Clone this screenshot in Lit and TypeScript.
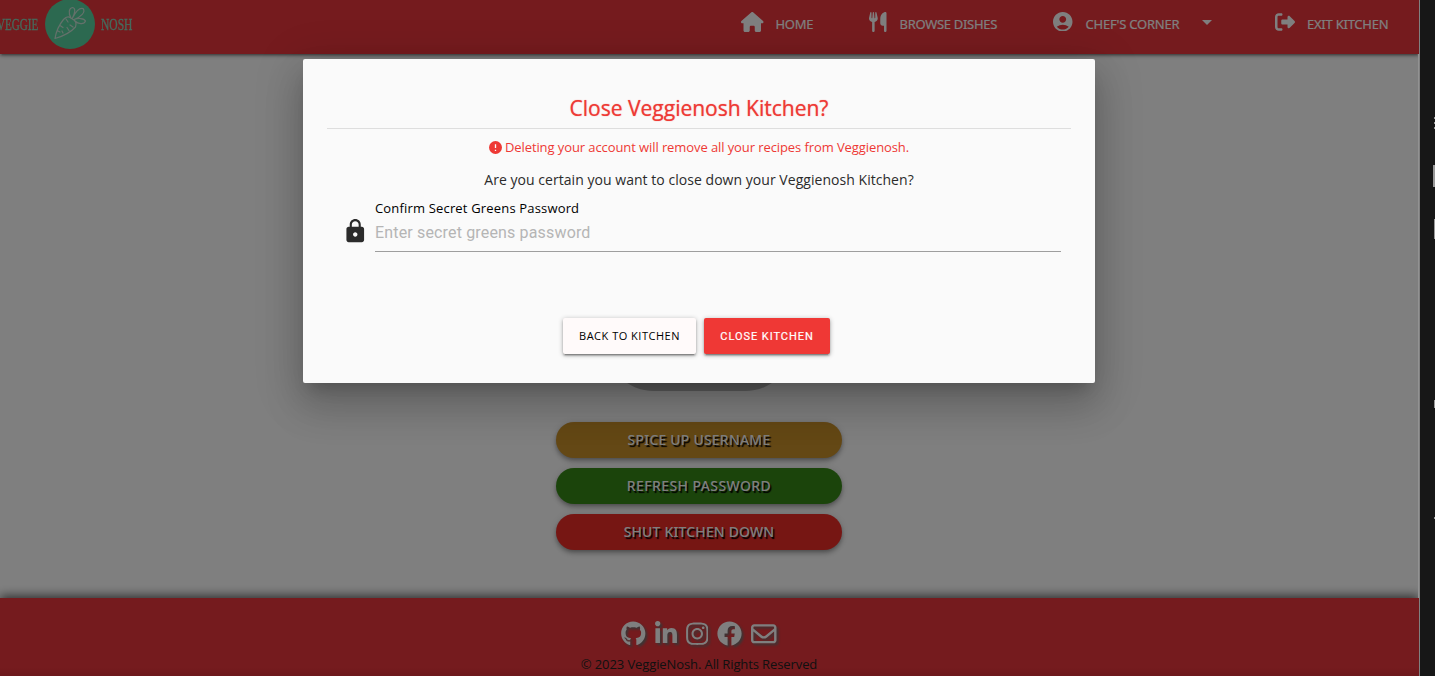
import { LitElement, html, svg, css } from "lit";
import { customElement } from "lit/decorators.js";

const HOUSE = "M575.8 255.5c0 18-15 32.1-32 32.1h-32l.7 160.2c0 2.7-.2 5.4-.5 8.1V472c0 22.1-17.9 40-40 40H456c-1.1 0-2.2 0-3.3-.1c-1.4 .1-2.8 .1-4.2 .1H416 392c-22.1 0-40-17.9-40-40V448 384c0-17.7-14.3-32-32-32H256c-17.7 0-32 14.3-32 32v64 24c0 22.1-17.9 40-40 40H160 128.1c-1.5 0-3-.1-4.5-.2c-1.2 .1-2.4 .2-3.6 .2H104c-22.1 0-40-17.9-40-40V360c0-.9 0-1.9 .1-2.8V287.6H32c-18 0-32-14-32-32.1c0-9 3-17 10-24L266.4 8c7-7 15-8 22-8s15 2 21 7L564.8 231.5c8 7 12 15 11 24z";
const UTENSILS = "M416 0C400 0 288 32 288 176V288c0 35.3 28.7 64 64 64h32V480c0 17.7 14.3 32 32 32s32-14.3 32-32V352 240 32c0-17.7-14.3-32-32-32zM64 16C64 7.8 57.9 1 49.7.1S34.2 4.6 32.4 12.5L2.1 148.8C.7 155.1 0 161.5 0 167.9c0 45.9 35.1 83.6 80 87.7V480c0 17.7 14.3 32 32 32s32-14.3 32-32V255.6c44.9-4.1 80-41.8 80-87.7c0-6.4-.7-12.8-2.1-19.1L191.6 12.5c-1.8-8-9.3-13.3-17.4-12.4S160 7.8 160 16V150.2c0 5.4-4.4 9.8-9.8 9.8c-5.1 0-9.3-3.9-9.8-9L127.9 14.6C127.2 6.3 120.3 0 112 0s-15.2 6.3-15.9 14.6L83.7 151c-.5 5.1-4.7 9-9.8 9c-5.4 0-9.8-4.4-9.8-9.8V16z";
const ACCOUNT = "M12 2C6.48 2 2 6.48 2 12s4.48 10 10 10 10-4.48 10-10S17.52 2 12 2zm0 4c1.93 0 3.5 1.57 3.5 3.5S13.93 13 12 13s-3.5-1.57-3.5-3.5S10.07 6 12 6zm0 14c-2.03 0-4.43-.82-6.14-2.88a9.947 9.947 0 0 1 12.28 0C16.43 19.18 14.03 20 12 20z";
const EXIT = "M377.9 105.9L500.7 228.7c7.2 7.2 11.3 17.1 11.3 27.3s-4.1 20.1-11.3 27.3L377.9 406.1c-6.4 6.4-15 9.9-24 9.9c-18.7 0-33.9-15.2-33.9-33.9l0-62.1-128 0c-17.7 0-32-14.3-32-32l0-64c0-17.7 14.3-32 32-32l128 0 0-62.1c0-18.7 15.2-33.9 33.9-33.9c9 0 17.6 3.6 24 9.9zM160 96L96 96c-17.7 0-32 14.3-32 32l0 256c0 17.7 14.3 32 32 32l64 0c17.7 0 32 14.3 32 32s-14.3 32-32 32l-64 0c-53 0-96-43-96-96L0 128C0 75 43 32 96 32l64 0c17.7 0 32 14.3 32 32s-14.3 32-32 32z";
const LOCK = "M18 8h-1V6c0-2.76-2.24-5-5-5S7 3.24 7 6v2H6c-1.1 0-2 .9-2 2v10c0 1.1.9 2 2 2h12c1.1 0 2-.9 2-2V10c0-1.1-.9-2-2-2zm-6 9c-1.1 0-2-.9-2-2s.9-2 2-2 2 .9 2 2-.9 2-2 2zm3.1-9H8.9V6c0-1.71 1.39-3.1 3.1-3.1 1.71 0 3.1 1.39 3.1 3.1v2z";
const GITHUB = "M165.9 397.4c0 2-2.3 3.6-5.2 3.6-3.3.3-5.6-1.3-5.6-3.6 0-2 2.3-3.6 5.2-3.6 3-.3 5.6 1.3 5.6 3.6zm-31.1-4.5c-.7 2 1.3 4.3 4.3 4.9 2.6 1 5.6 0 6.2-2s-1.3-4.3-4.3-5.2c-2.6-.7-5.5.3-6.2 2.3zm44.2-1.7c-2.9.7-4.9 2.6-4.6 4.9.3 2 2.9 3.3 5.9 2.6 2.9-.7 4.9-2.6 4.6-4.6-.3-1.9-3-3.2-5.9-2.9zM244.8 8C106.1 8 0 113.3 0 252c0 110.9 69.8 205.8 169.5 239.2 12.8 2.3 17.3-5.6 17.3-12.1 0-6.2-.3-40.4-.3-61.4 0 0-70 15-84.7-29.8 0 0-11.4-29.1-27.8-36.6 0 0-22.9-15.7 1.6-15.4 0 0 24.9 2 38.6 25.8 21.9 38.6 58.6 27.5 72.9 20.9 2.3-16 8.8-27.1 16-33.7-55.9-6.2-112.3-14.3-112.3-110.5 0-27.5 7.6-41.3 23.6-58.9-2.6-6.5-11.1-33.3 2.6-67.9 20.9-6.5 69 27 69 27 20-5.6 41.5-8.5 62.8-8.5s42.8 2.9 62.8 8.5c0 0 48.1-33.6 69-27 13.7 34.7 5.2 61.4 2.6 67.9 16 17.7 25.8 31.5 25.8 58.9 0 96.5-58.9 104.2-114.8 110.5 9.2 7.9 17 22.9 17 46.4 0 33.7-.3 75.4-.3 83.6 0 6.5 4.6 14.4 17.3 12.1C428.2 457.8 496 362.9 496 252 496 113.3 383.5 8 244.8 8z";
const LINKEDIN = "M100.28 448H7.4V148.9h92.88zM53.79 108.1C24.09 108.1 0 83.5 0 53.8a53.79 53.79 0 0 1 107.58 0c0 29.7-24.1 54.3-53.79 54.3zM447.9 448h-92.68V302.4c0-34.7-.7-79.2-48.29-79.2-48.29 0-55.69 37.7-55.69 76.7V448h-92.78V148.9h89.08v40.8h1.3c12.4-23.5 42.69-48.3 87.88-48.3 94 0 111.28 61.9 111.28 142.3V448z";
const INSTAGRAM = "M224.1 141c-63.6 0-114.9 51.3-114.9 114.9s51.3 114.9 114.9 114.9S339 319.5 339 255.9 287.7 141 224.1 141zm0 189.6c-41.1 0-74.7-33.5-74.7-74.7s33.5-74.7 74.7-74.7 74.7 33.5 74.7 74.7-33.6 74.7-74.7 74.7zm146.4-194.3c0 14.9-12 26.8-26.8 26.8-14.9 0-26.8-12-26.8-26.8s12-26.8 26.8-26.8 26.8 12 26.8 26.8zm76.1 27.2c-1.7-35.9-9.9-67.7-36.2-93.9-26.2-26.2-58-34.4-93.9-36.2-37-2.1-147.9-2.1-184.9 0-35.8 1.7-67.6 9.9-93.9 36.1s-34.4 58-36.2 93.9c-2.1 37-2.1 147.9 0 184.9 1.7 35.9 9.9 67.7 36.2 93.9s58 34.4 93.9 36.2c37 2.1 147.9 2.1 184.9 0 35.9-1.7 67.7-9.9 93.9-36.2 26.2-26.2 34.4-58 36.2-93.9 2.1-37 2.1-147.8 0-184.8zM398.8 388c-7.8 19.6-22.9 34.7-42.6 42.6-29.5 11.7-99.5 9-132.1 9s-102.7 2.6-132.1-9c-19.6-7.8-34.7-22.9-42.6-42.6-11.7-29.5-9-99.5-9-132.1s-2.6-102.7 9-132.1c7.8-19.6 22.9-34.7 42.6-42.6 29.5-11.7 99.5-9 132.1-9s102.7-2.6 132.1 9c19.6 7.8 34.7 22.9 42.6 42.6 11.7 29.5 9 99.5 9 132.1s2.7 102.7-9 132.1z";
const FACEBOOK = "M504 256C504 119 393 8 256 8S8 119 8 256c0 123.78 90.69 226.38 209.25 245V327.69h-63V256h63v-54.64c0-62.15 37-96.48 93.67-96.48 27.14 0 55.52 4.84 55.52 4.84v61h-31.28c-30.8 0-40.41 19.12-40.41 38.73V256h68.78l-11 71.69h-57.78V501C413.31 482.38 504 379.78 504 256z";
const ENVELOPE = "M64 112c-8.8 0-16 7.2-16 16v22.1L220.5 291.7c20.7 17 50.4 17 71.1 0L464 150.1V128c0-8.8-7.2-16-16-16H64zM48 212.2V384c0 8.8 7.2 16 16 16H448c8.8 0 16-7.2 16-16V212.2L322 328.8c-38.4 31.5-93.7 31.5-132 0L48 212.2zM0 128C0 92.7 28.7 64 64 64H448c35.3 0 64 28.7 64 64V384c0 35.3-28.7 64-64 64H64c-35.3 0-64-28.7-64-64V128z";

const icon = (d: string, box: string, w: number, h: number) =>
  html`<svg class="icon" viewBox=${box} width=${w} height=${h}>${svg`<path fill="currentColor" d=${d}></path>`}</svg>`;

@customElement("app-root")
export class AppRoot extends LitElement {
  static styles = css`
    :host {
      display: flex;
      position: relative;
      width: 1435px;
      height: 676px;
      overflow: hidden;
      background: #171717;
      font-family: "Open Sans", "Noto Sans", sans-serif;
    }
    .icon { display: block; flex: none; }
    .page {
      display: flex;
      flex-direction: column;
      box-sizing: border-box;
      width: 1419px;
      height: 676px;
      background: #fff;
      overflow: hidden;
    }
    .edge { width: 1px; height: 676px; background: #808080; z-index: 3; }
    .glow { width: 1px; height: 544px; margin-top: 54px; box-shadow: -1px 0 0 #929292; }
    header {
      display: flex;
      flex: none;
      height: 54px;
      background: #ea363c;
      color: #fff;
      box-shadow: 0 2px 2px 0 rgba(0,0,0,.14), 0 3px 1px -2px rgba(0,0,0,.12), 0 1px 5px 0 rgba(0,0,0,.4);
      z-index: 1;
    }
    .brand {
      display: flex;
      align-items: center;
      height: 50px;
      margin: -1px 0 0 -3px;
      gap: 6px;
      font-family: "Liberation Serif", serif;
      font-size: 16.5px;
      color: #8ad4b8;
      -webkit-text-stroke: .3px #8ad4b8;
      width: 731px;
    }
    .brand span { position: relative; top: 1px; width: 32px; transform: scaleX(.7); transform-origin: left; }
    .brand .veg { width: 42px; transform: scaleX(.67); }
    .badge { border-radius: 50%; background: #58d2a0; }
    nav { display: flex; height: 48px; padding-left: 13px; }
    .item {
      display: flex;
      flex: none;
      align-items: center;
      height: 48px;
      font-family: "Noto Sans", sans-serif;
      font-size: 13px;
      letter-spacing: -0.3px;
      white-space: nowrap;
      -webkit-text-stroke: .15px #fff;
    }
    .item .icon { margin-top: -5px; }
    .home { width: 128px; gap: 12px; }
    .browse { width: 184px; gap: 13px; }
    .chef { width: 222px; gap: 13px; }
    .chef .text { width: 103px; letter-spacing: -.22px; }
    .exit { gap: 12px; letter-spacing: -.24px; }
    main { display: flex; flex: 1; flex-direction: column; align-items: center; padding-right: 21px; }
    .avatar { width: 190px; height: 190px; margin-top: 146px; border-radius: 50px; background: #bdbdbd; box-sizing: content-box; padding: .5px; margin-bottom: 31px; }
    .pill {
      display: flex;
      flex: none;
      align-items: center;
      justify-content: center;
      box-sizing: border-box;
      width: 286px;
      height: 36px;
      padding-bottom: 2px;
      margin-bottom: 10px;
      border-radius: 18px;
      font-family: "Noto Sans", sans-serif;
      font-size: 14px;
      font-weight: 500;
      color: #fff;
      text-shadow: 1.5px 1.5px 1px #000;
      box-shadow: 0 4px 5px 0 rgba(0,0,0,.14), 0 1px 10px 0 rgba(0,0,0,.12), 0 2px 4px -1px rgba(0,0,0,.3);
    }
    .gold { background: #c9902b; letter-spacing: .2px; }
    .green { background: #378917; letter-spacing: .4px; }
    .red { background: #ec2c27; letter-spacing: .15px; }
    footer {
      display: flex;
      flex: none;
      flex-direction: column;
      align-items: center;
      box-sizing: border-box;
      height: 78px;
      padding: 23px 21px 0 0;
      background: linear-gradient(#ea363c 70px, #d93238 78px);
      box-shadow: 0 -2px 10px rgba(0,0,0,.65);
      z-index: 1;
    }
    .social { display: flex; align-items: center; gap: 9px; height: 25px; color: #fff; }
    .social .icon { filter: drop-shadow(2px 2px 1px rgba(110,110,110,.9)); }
    .copy { margin-top: 9px; font-size: 13px; line-height: 18px; letter-spacing: -.1px; color: #222; white-space: nowrap; }
    .shade { position: absolute; inset: 0 16px 0 0; background: rgba(0,0,0,.5); z-index: 2; }
    .modal {
      position: absolute;
      left: 303px;
      top: 59px;
      box-sizing: border-box;
      width: 792px;
      height: 324px;
      padding: 33px 24px 0;
      border-radius: 2px;
      background: #fafafa;
      box-shadow: 0 24px 38px 3px rgba(0,0,0,.14), 0 9px 46px 8px rgba(0,0,0,.12), 0 11px 15px -7px rgba(0,0,0,.2);
      z-index: 4;
      text-align: center;
      white-space: nowrap;
    }
    h1 {
      margin: 0;
      height: 36px;
      border-bottom: 1px solid #dedede;
      font-size: 21px;
      font-weight: 400;
      line-height: 33px;
      color: #ee3935;
      text-shadow: 0 0 1px rgba(238,57,53,.7);
    }
    .warn { display: flex; align-items: center; justify-content: center; gap: 3px; margin-top: 8px; height: 20px; font-size: 13px; letter-spacing: -.09px; color: #ee3935; }
    .ask { margin-top: 12px; font-size: 14px; line-height: 21px; letter-spacing: .04px; color: #2b2b2b; }
    .field { display: flex; margin: 9px 10px 0 15px; text-align: left; color: #2b2b2b; }
    .lock { width: 33px; padding-top: 19px; }
    .input { flex: 1; height: 52px; border-bottom: 1px solid #9e9e9e; }
    .label { font-size: 13px; line-height: 18px; letter-spacing: .17px; color: #000; }
    .hint { margin-top: 6px; font-family: Roboto, sans-serif; font-size: 16px; line-height: 20px; letter-spacing: .16px; color: #b5b5b5; }
    .actions { display: flex; gap: 8px; margin: 66px 0 0 236px; }
    .btn {
      display: flex;
      align-items: center;
      justify-content: center;
      box-sizing: border-box;
      width: 133px;
      height: 36px;
      padding-bottom: 1px;
      border-radius: 2px;
      background: #fffafa;
      color: #000;
      font-size: 11px;
      letter-spacing: .5px;
      box-shadow: 0 2px 2px 0 rgba(0,0,0,.2), 0 3px 1px -2px rgba(0,0,0,.2), 0 1px 5px 0 rgba(0,0,0,.3);
    }
    .danger { width: 126px; padding: 0; background: #ef3835; color: #fff; font-family: Roboto, sans-serif; -webkit-text-stroke: .2px #fff; letter-spacing: .95px; }
    .rail { display: flex; flex-direction: column; align-items: flex-end; width: 15px; height: 676px; }
    .tick { width: 1px; background: #999; }
    .t1 { margin-top: 117px; height: 2px; box-shadow: 0 5px 0 #999, 0 10px 0 #999; }
    .t2 { margin-top: 46px; width: 2px; height: 22px; }
    .t3 { margin-top: 32px; height: 20px; }
    .t4 { margin-top: 161px; height: 8px; }
    .t5 { margin-top: 109px; height: 2px; }
  `;

  render() {
    return html`
      <div class="page">
        <header>
          <div class="brand">
            <span class="veg">VEGGIE</span>
            <svg class="icon badge" width="50" height="50" viewBox="0 0 50 50" fill="none" stroke="#c8e2d6" stroke-width="1.2" stroke-linecap="round" stroke-linejoin="round">
              <path d="M10 39.5C11 33 14 26 18.5 20.5C22 16.500 25 18 26.500 19.500C30 21 32 24 30.500 28C26 33 17 37.500 10 39.500ZM15 26.500l3 2M13 32l2 1M18 34l-1-2M24 31.500l-2-3M21 20l2 3M28 28l-3-2M26 19C23 14 24 9 27.500 8.500C31 9 30 14 27.500 19C31 12 34 8.500 38 9.500C41 13 36 18 29 20.500C33 19 39 19 40.500 22C39 26 33 25 30 22"></path>
            </svg>
            <span>NOSH</span>
          </div>
          <nav>
            <div class="item home">${icon(HOUSE, "0 0 576 512", 22.5, 20)}<span>HOME</span></div>
            <div class="item browse">${icon(UTENSILS, "0 0 448 512", 17.5, 20)}<span>BROWSE DISHES</span></div>
            <div class="item chef">${icon(ACCOUNT, "2 2 20 20", 19.5, 19.5)}<span class="text">CHEF'S CORNER</span>${icon("M7 10l5 5 5-5z", "7 7 10 10", 10, 10)}</div>
            <div class="item exit">${icon(EXIT, "0 0 512 512", 20, 20)}<span>EXIT KITCHEN</span></div>
          </nav>
        </header>
        <main>
          <div class="avatar"></div>
          <div class="pill gold">SPICE UP USERNAME</div>
          <div class="pill green">REFRESH PASSWORD</div>
          <div class="pill red">SHUT KITCHEN DOWN</div>
        </main>
        <footer>
          <div class="social">
            ${icon(GITHUB, "0 0 496 512", 24.5, 25)}
            ${icon(LINKEDIN, "0 0 448 512", 22, 25)}
            ${icon(INSTAGRAM, "0 0 448 512", 22.5, 25.5)}
            ${icon(FACEBOOK, "0 0 512 512", 25, 25)}
            ${icon(ENVELOPE, "0 0 512 512", 25.5, 25.5)}
          </div>
          <div class="copy">© 2023 VeggieNosh. All Rights Reserved</div>
        </footer>
      </div>
      <div class="edge"><div class="glow"></div></div>
      <div class="rail">
        <div class="tick t1"></div><div class="tick t2"></div><div class="tick t3"></div><div class="tick t4"></div><div class="tick t5"></div>
      </div>
      <div class="shade"></div>
      <div class="modal">
        <h1>Close Veggienosh Kitchen?</h1>
        <div class="warn">
          <svg class="icon" width="13" height="13" viewBox="0 0 13 13"><circle cx="6.5" cy="6.500" r="6.500" fill="#ee3935"></circle><path d="M6.500 3.200v3.800M6.500 8.700v1.300" stroke="#fafafa" stroke-width="1.300"></path></svg>
          <span>Deleting your account will remove all your recipes from Veggienosh.</span>
        </div>
        <div class="ask">Are you certain you want to close down your Veggienosh Kitchen?</div>
        <div class="field">
          <div class="lock">${icon(LOCK, "0 0 24 24", 26.5, 26.5)}</div>
          <div class="input">
            <div class="label">Confirm Secret Greens Password</div>
            <div class="hint">Enter secret greens password</div>
          </div>
        </div>
        <div class="actions">
          <div class="btn">BACK TO KITCHEN</div>
          <div class="btn danger">CLOSE KITCHEN</div>
        </div>
      </div>
    `;
  }
}
